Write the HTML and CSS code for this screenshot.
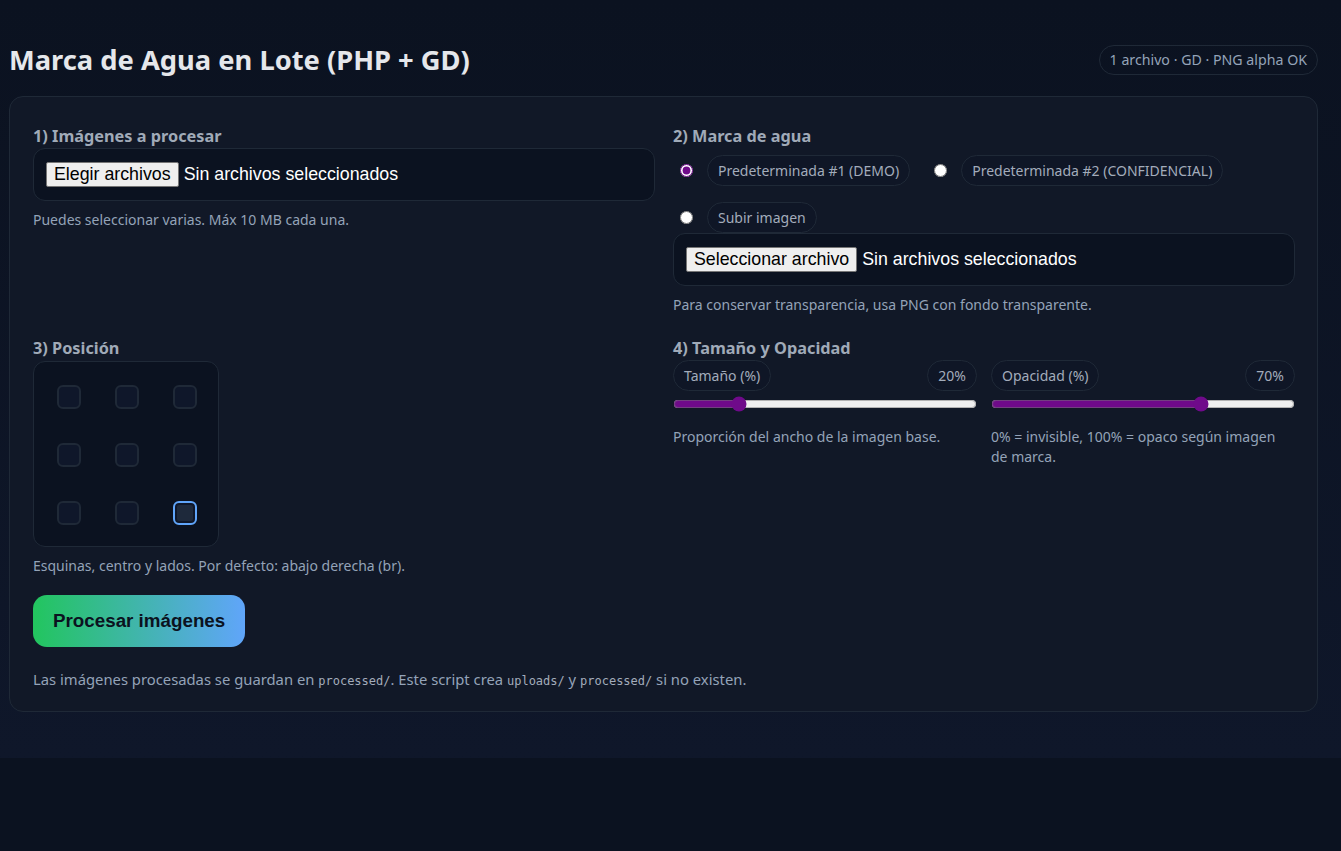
FILE: index.html
```html
<!doctype html>
<html lang="es">
<head>
<meta charset="utf-8">
<title>Marca de Agua en Lote (PHP + GD)</title>
<meta name="viewport" content="width=device-width,initial-scale=1">
<link rel="stylesheet" href="styles.css">
</head>
<body>
<div class="page">
	<header class="top">
		<h1>Marca de Agua en Lote (PHP + GD)</h1>
		<span class="badge">1 archivo · GD · PNG alpha OK</span>
	</header>

	<form class="panel" method="post" enctype="multipart/form-data">
		<div class="grid">
			<section>
				<h2>1) Imágenes a procesar</h2>
				<label class="file">
					<input type="file" name="images[]" multiple accept="image/*">
					<span class="file-btn">Elegir archivos</span>
					<span class="file-name">Sin archivos seleccionados</span>
				</label>
				<p class="hint">Puedes seleccionar varias. Máx 10 MB cada una.</p>
			</section>

			<section>
				<h2>2) Marca de agua</h2>
				<div class="options">
					<label class="opt"><input type="radio" name="wm" value="demo" checked><span class="pill">Predeterminada #1 (DEMO)</span></label>
					<label class="opt"><input type="radio" name="wm" value="conf"><span class="pill">Predeterminada #2 (CONFIDENCIAL)</span></label>
					<label class="opt"><input type="radio" name="wm" value="upload"><span class="pill">Subir imagen</span></label>
				</div>
				<label class="file">
					<input type="file" name="wm_file" accept="image/png">
					<span class="file-btn">Seleccionar archivo</span>
					<span class="file-name">Sin archivos seleccionados</span>
				</label>
				<p class="hint">Para conservar transparencia, usa PNG con fondo transparente.</p>
			</section>

			<section>
				<h2>3) Posición</h2>
				<div class="pos">
					<span class="cell" title="tl"></span>
					<span class="cell" title="tc"></span>
					<span class="cell" title="tr"></span>
					<span class="cell" title="ml"></span>
					<span class="cell" title="c"></span>
					<span class="cell" title="mr"></span>
					<span class="cell" title="bl"></span>
					<span class="cell" title="bc"></span>
					<span class="cell on" title="br"></span>
				</div>
				<p class="hint">Esquinas, centro y lados. Por defecto: abajo derecha (br).</p>
			</section>

			<section>
				<h2>4) Tamaño y Opacidad</h2>
				<div class="sliders">
					<div class="slider">
						<div class="slider-head"><span class="pill">Tamaño (%)</span><span class="pill">20%</span></div>
						<input type="range" name="size" min="0" max="100" value="20">
						<p class="hint">Proporción del ancho de la imagen base.</p>
					</div>
					<div class="slider">
						<div class="slider-head"><span class="pill">Opacidad (%)</span><span class="pill">70%</span></div>
						<input type="range" name="opacity" min="0" max="100" value="70">
						<p class="hint">0% = invisible, 100% = opaco según imagen de marca.</p>
					</div>
				</div>
			</section>
		</div>

		<button type="submit" class="go">Procesar imágenes</button>

		<p class="hint note">Las imágenes procesadas se guardan en <code>processed/</code>. Este script crea <code>uploads/</code> y <code>processed/</code> si no existen.</p>
	</form>
</div>
</body>
</html>
```

FILE: styles.css
```css
html{background:#0b1220;}
body{margin:0;font-family:"Segoe UI","Noto Sans",sans-serif;color:#e5e7eb;background:linear-gradient(180deg,#0b1220,#0f172a);}
.page{padding:40px 23px 46px 9px;}

.top{display:flex;align-items:center;justify-content:space-between;margin-bottom:16px;}
.top h1{margin:0;font-size:27.3px;line-height:40px;font-weight:700;color:#e5e7eb;}
.badge{padding:0 10px;height:30px;line-height:28px;box-sizing:border-box;border:1px solid #1f2937;border-radius:999px;font-size:14.2px;color:#94a3b8;}

.panel{display:block;margin:0;padding:28px 22px 20px 23px;background:#111827;border:1px solid #1f2937;border-radius:14px;}
.grid{display:grid;grid-template-columns:1fr 1fr;gap:22px 18px;}
.panel h2{margin:0 0 1px;font-size:16.3px;line-height:22px;font-weight:700;color:#a0aab8;}

.hint{margin:9px 0 0;font-size:14px;line-height:20px;color:#94a3b8;}

.file{display:flex;align-items:center;padding:13px 12px;background:#0b1220;border:1px solid #1f2937;border-radius:12px;cursor:pointer;font-family:"Liberation Sans",Arial,sans-serif;font-size:17.8px;}
.file input{display:none;}
.file-btn{padding:0 7px;height:25px;line-height:23px;box-sizing:border-box;background:#efefef;border:1px solid #767676;border-radius:2px;color:#000;}
.file-name{margin-left:5px;color:#fff;}

.options{display:flex;flex-wrap:wrap;gap:16px 17px;padding-top:7px;}
.opt{display:flex;align-items:center;gap:14px;cursor:pointer;}
.opt input{margin:0 0 0 7px;width:13px;height:13px;accent-color:#6f0a8a;}
.pill{display:inline-block;height:31px;line-height:29px;box-sizing:border-box;padding:0 10px;background:#0f1626;border:1px solid #1f2937;border-radius:999px;font-size:14px;color:#a3acbb;white-space:nowrap;}

.pos{display:inline-grid;grid-template-columns:repeat(3,24px);gap:34px;padding:23px 21px 21px 23px;margin-top:1px;background:#0b1220;border:1px solid #1f2937;border-radius:12px;}
.cell{width:24px;height:24px;box-sizing:border-box;border:2px solid #1f2937;border-radius:6px;background:#0f172a;cursor:pointer;}
.cell.on{border-color:#60a5fa;background:#1e293b;box-shadow:inset 0 0 0 2px #0f172a;}

.sliders{display:grid;grid-template-columns:1fr 1fr;gap:14px;margin-top:1px;}
.slider-head{display:flex;justify-content:space-between;}
.slider input{display:block;width:100%;margin:5px 0 8px;accent-color:#6f0a8a;}
.slider .hint{margin-top:15px;padding-right:6px;}

.go{display:block;margin:19px 0 0;padding:15px 20px;line-height:22px;border:0;border-radius:14px;background:linear-gradient(90deg,#22c55e,#60a5fa);color:#0b1220;font-family:"Liberation Sans",Arial,sans-serif;font-size:18.8px;font-weight:700;cursor:pointer;}
.note{margin-top:22px;font-size:14.8px;}
.note code{font-family:"DejaVu Sans Mono","Liberation Mono",monospace;font-size:12px;color:#a3acbb;}
```
